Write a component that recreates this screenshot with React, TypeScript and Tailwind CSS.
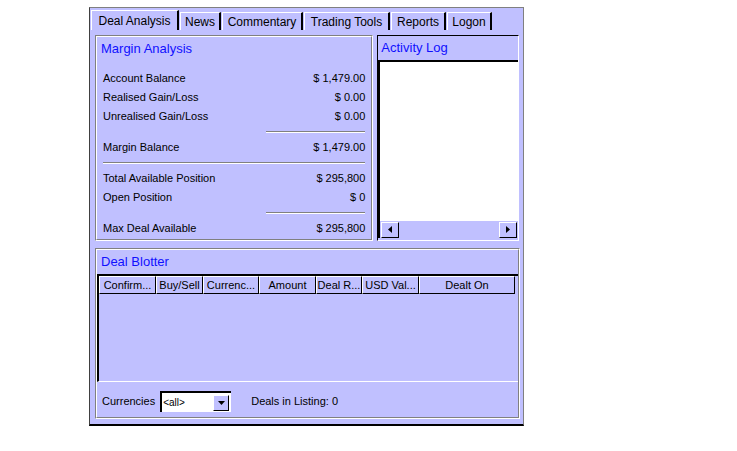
import React from "react";

const Tab = ({ label, w, selected }: { label: string; w: string; selected?: boolean }) => (
  <div
    className={
      "flex items-center justify-center border-t border-l border-white border-r-2 border-r-black text-[12px] text-black " +
      w +
      (selected ? " h-[20px] mr-[1px]" : " h-[18px] mr-[1px]")
    }
  >
    {label}
  </div>
);

const Etched = ({ className, children }: { className: string; children?: React.ReactNode }) => (
  <div className={"border border-t-[#808080] border-l-[#808080] border-b-white border-r-white " + className}>
    <div className="w-full h-full border border-t-white border-l-white border-b-[#808080] border-r-[#808080] flex flex-col">
      {children}
    </div>
  </div>
);

const Row = ({ label, value }: { label: string; value: string }) => (
  <div className="h-[19px] flex items-center justify-between">
    <span>{label}</span>
    <span>{value}</span>
  </div>
);

const ShortLine = () => (
  <div className="flex justify-end h-[12px] items-center">
    <div className="w-[99px] h-[2px] border-t border-[#808080] border-b border-b-white" />
  </div>
);

const HeaderCell = ({ label, w }: { label: string; w: string }) => (
  <div
    className={
      "h-[18px] flex items-center justify-center border-t border-l border-white border-r border-b border-r-black border-b-black whitespace-nowrap overflow-hidden " +
      w
    }
  >
    {label}
  </div>
);

export default function App() {
  return (
    <div className="w-[737px] h-[451px] bg-white pl-[89px] pt-[7px] font-['Liberation_Sans',Arial,sans-serif] text-[11px] text-black">
      <div className="w-[435px] h-[419px] bg-[#c0c0ff] border-t border-t-[#808080] border-l border-l-[#404040] border-r border-r-[#808080] border-b-2 border-b-black flex flex-col">
        {/* tabs */}
        <div className="h-[22px] flex items-end pl-[1px]">
          <Tab label="Deal Analysis" w="w-[88px]" selected />
          <Tab label="News" w="w-[41px]" />
          <Tab label="Commentary" w="w-[81px]" />
          <Tab label="Trading Tools" w="w-[86px]" />
          <Tab label="Reports" w="w-[55px]" />
          <Tab label="Logon" w="w-[45px]" />
        </div>
        <div className="flex-1 pl-[5px] pr-[4px] pt-[5px] flex flex-col">
          <div className="flex gap-[4px] h-[206px]">
            {/* Margin Analysis */}
            <Etched className="w-[279px] h-full">
              <div className="h-[22px] flex items-center pl-[4px] pt-[1px] text-[13px] text-[#1010ff]">Margin Analysis</div>
              <div className="pl-[6px] pr-[6px] pt-[10px]">
                <Row label="Account Balance" value="$ 1,479.00" />
                <Row label="Realised Gain/Loss" value="$ 0.00" />
                <Row label="Unrealised Gain/Loss" value="$ 0.00" />
                <ShortLine />
                <Row label="Margin Balance" value="$ 1,479.00" />
                <div className="h-[12px] flex items-center">
                  <div className="w-full h-[2px] border-t border-[#808080] border-b border-b-white" />
                </div>
                <Row label="Total Available Position" value="$ 295,800" />
                <Row label="Open Position" value="$ 0" />
                <ShortLine />
                <Row label="Max Deal Available" value="$ 295,800" />
              </div>
            </Etched>
            {/* Activity Log */}
            <div className="w-[142px] h-full border-t border-l border-black border-r border-b border-r-white border-b-white flex flex-col">
              <div className="h-[24px] flex items-center pl-[3px] pb-[1px] text-[13px] text-[#1010ff]">Activity Log</div>
              <div className="flex-1 border-t-2 border-l-2 border-black flex flex-col mb-[2px]">
                <div className="flex-1 bg-white" />
                <div className="h-[17px] bg-[#c0c0ff] flex justify-between items-center pl-[1px] pr-[1px]">
                  <div className="w-[18px] h-[16px] bg-[#c0c0ff] border-t border-l border-white border-r border-b border-r-black border-b-black flex items-center justify-center">
                    <svg width="4" height="7" viewBox="0 0 4 7"><path d="M4 0 L0 3.5 L4 7 Z" fill="black" /></svg>
                  </div>
                  <div className="w-[18px] h-[16px] bg-[#c0c0ff] border-t border-l border-white border-r border-b border-r-black border-b-black flex items-center justify-center">
                    <svg width="4" height="7" viewBox="0 0 4 7"><path d="M0 0 L4 3.5 L0 7 Z" fill="black" /></svg>
                  </div>
                </div>
              </div>
            </div>
          </div>
          {/* Deal Blotter */}
          <Etched className="mt-[7px] w-[425px] h-[171px]">
            <div className="h-[24px] flex items-center pl-[4px] pb-[1px] text-[13px] text-[#1010ff]">Deal Blotter</div>
            <div className="h-[108px] border-t-2 border-l-2 border-black border-b border-b-white flex flex-col">
              <div className="flex">
                <HeaderCell label="Confirm..." w="w-[57px]" />
                <HeaderCell label="Buy/Sell" w="w-[47px]" />
                <HeaderCell label="Currenc..." w="w-[56px]" />
                <HeaderCell label="Amount" w="w-[57px]" />
                <HeaderCell label="Deal R..." w="w-[46px]" />
                <HeaderCell label="USD Val..." w="w-[57px]" />
                <HeaderCell label="Dealt On" w="w-[96px]" />
              </div>
              <div className="flex-1" />
            </div>
            <div className="flex-1 flex items-center pl-[5px] pt-[4px]">
              <span>Currencies</span>
              <div className="ml-[5px] w-[71px] h-[21px] bg-white border-t-2 border-l-2 border-black flex items-center justify-between pr-[2px]">
                <span className="text-[10px] pl-[1px]">&lt;all&gt;</span>
                <div className="w-[16px] h-[16px] bg-[#c0c0ff] border-t border-l border-white border-r border-b border-r-black border-b-black flex items-center justify-center">
                  <svg width="7" height="4" viewBox="0 0 7 4"><path d="M0 0 L7 0 L3.5 4 Z" fill="black" /></svg>
                </div>
              </div>
              <span className="ml-[20px]">Deals in Listing: 0</span>
            </div>
          </Etched>
        </div>
      </div>
    </div>
  );
}
